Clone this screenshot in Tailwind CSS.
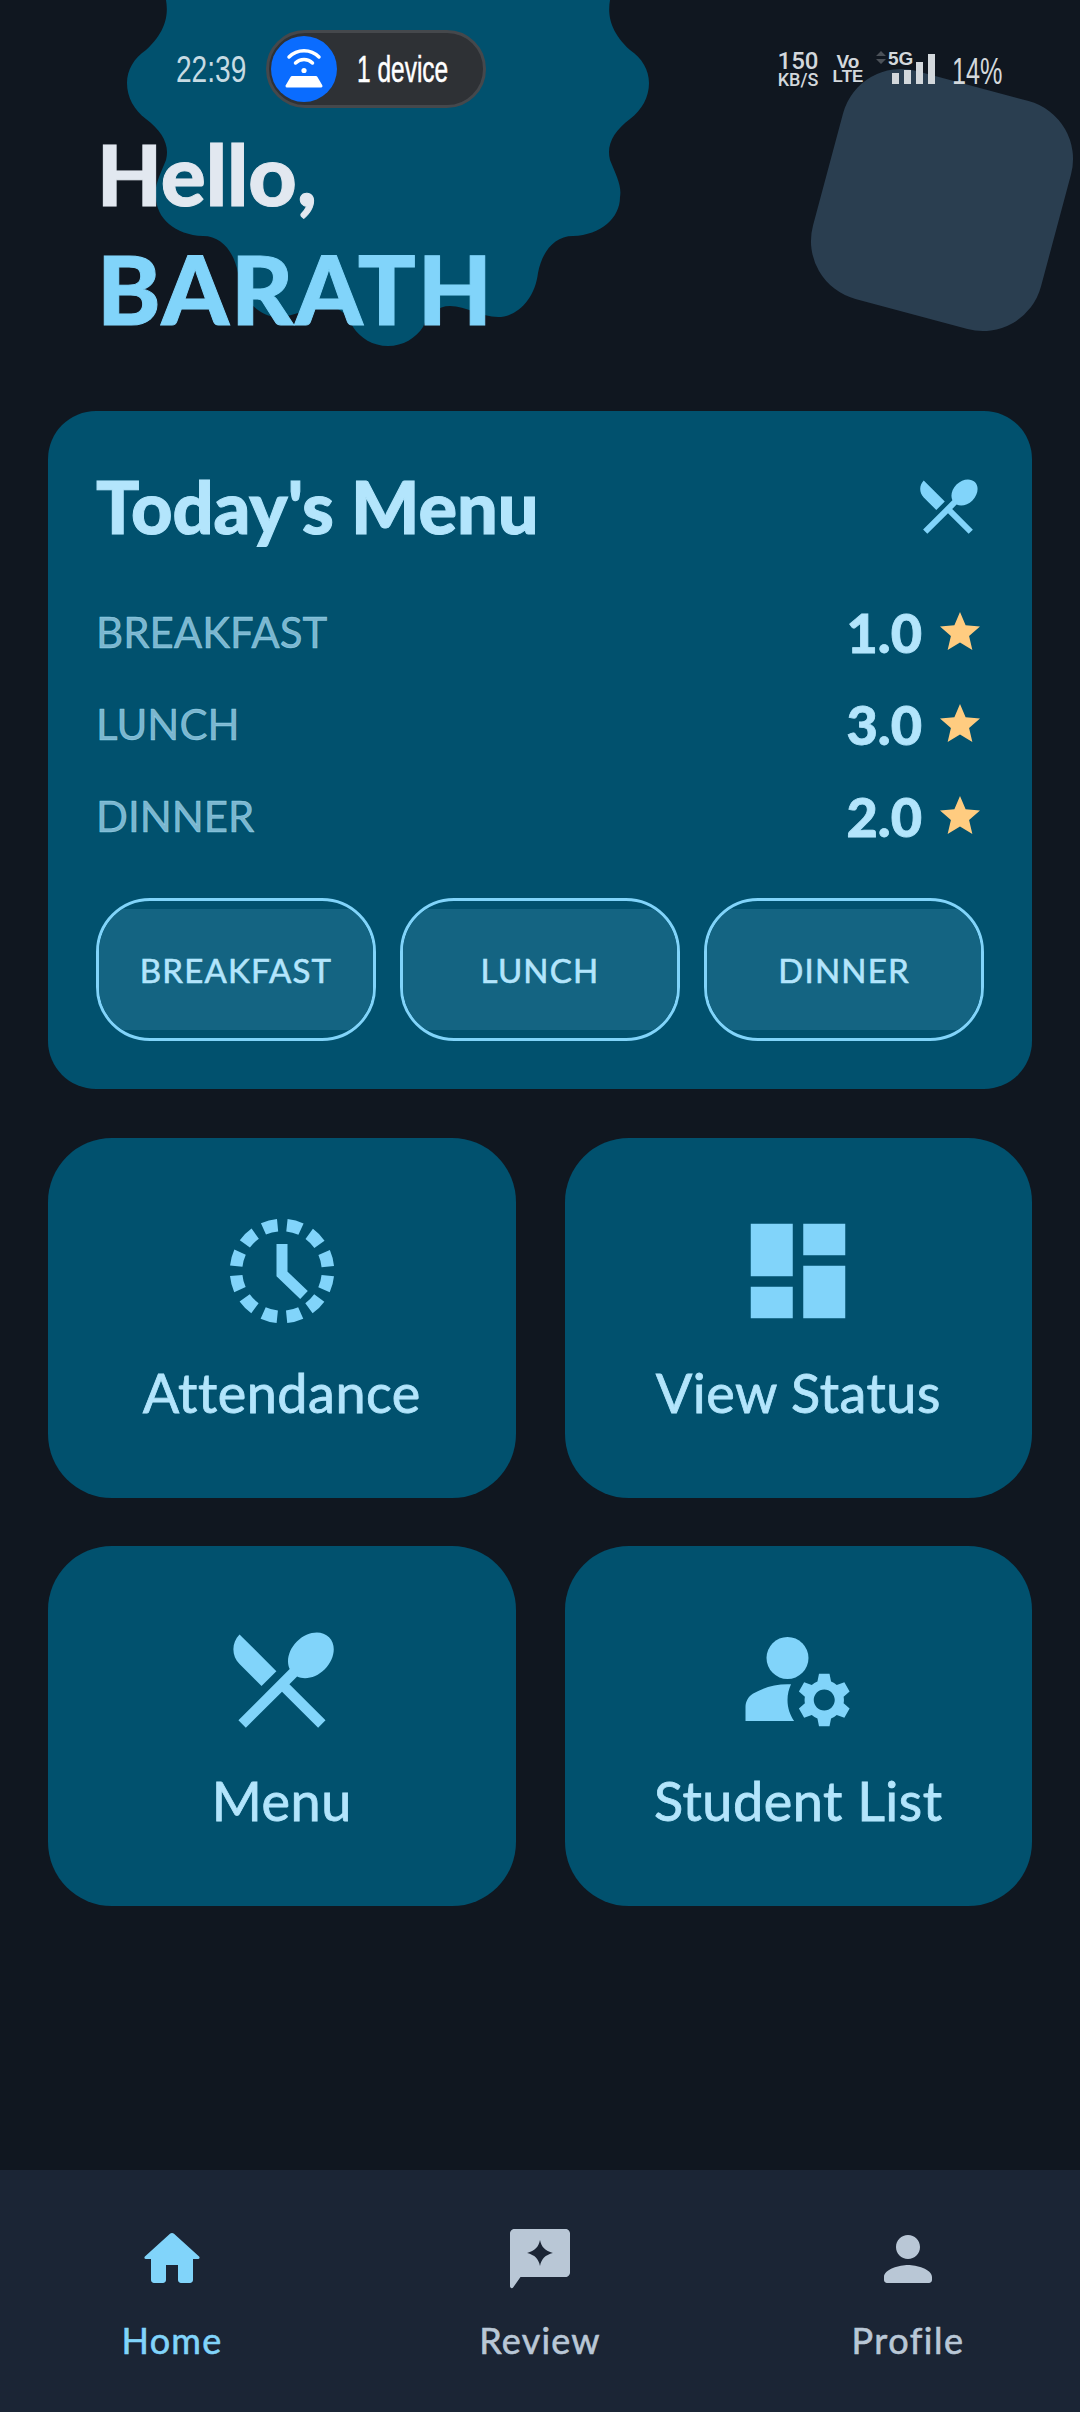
<!DOCTYPE html>
<html lang="en">
<head>
  <meta charset="UTF-8">
  <meta name="viewport" content="width=device-width, initial-scale=1.0">
  <script src="https://cdn.jsdelivr.net/npm/@tailwindcss/browser@4"></script>
  <title>Home</title>
</head>
<body class="bg-[#101720] font-['Lato',sans-serif]">
  <div class="relative w-[1080px] h-[2412px] overflow-hidden flex flex-col">

    <!-- background shapes -->
    <svg class="absolute left-0 top-0" width="700" height="360" viewBox="0 0 700 360">
      <path fill="#01516e" d="M166 0 C168 12 168 30 146 50 C134 58 127 70 127 83 C127 97 134 110 146 119 C162 131 170 145 166 160 C160 175 154 186 156 197 C156 218 175 235 203 236 C222 236 234 252 238 273 C241 298 258 317 278 317 C295 317 310 306 326 306 C338 306 348 314 353 327 C360 338 373 346 388 346 C403 346 416 338 423 327 C428 314 438 306 450 306 C466 306 481 317 498 317 C518 317 535 298 538 273 C542 252 554 236 573 236 C601 235 620 218 620 197 C622 186 616 175 610 160 C606 145 614 131 630 119 C642 110 649 97 649 83 C649 70 642 58 630 50 C608 30 608 12 610 0 Z"/>
    </svg>
    <div class="absolute left-[824px] top-[82px] w-[236px] h-[236px] rounded-[60px] rotate-[15deg] bg-[#2a3e50]"></div>

    <!-- status bar -->
    <div class="absolute left-0 top-[30px] w-full h-[78px] pl-[176px] pr-[80px] flex items-center text-[#d3d8dc] font-['Liberation_Sans',sans-serif]">
      <span class="w-[90px] text-[36px] text-[#c7dbe3] whitespace-nowrap origin-left scale-x-[0.78] mt-[2px]">22:39</span>
      <div class="w-[220px] h-[78px] rounded-full border-[3px] border-[#45484c] bg-[#2e3135] flex items-center pl-[2px]">
        <div class="w-[66px] h-[66px] rounded-full bg-[#0a6cff]">
          <svg width="66" height="66" viewBox="0 0 66 66" fill="none">
            <path d="M18 21 A21 21 0 0 1 48 21" stroke="#fff" stroke-width="3.5" stroke-linecap="round"/>
            <path d="M24.5 27 A12 12 0 0 1 41.5 27" stroke="#fff" stroke-width="3.5" stroke-linecap="round"/>
            <circle cx="33" cy="34.500" r="2.600" fill="#fff"/>
            <path d="M21 41.500 H45 L50 50 H16 Z" fill="#fff" stroke="#fff" stroke-width="3" stroke-linejoin="round"/>
          </svg>
        </div>
        <span class="ml-[20px] text-[36px] text-white whitespace-nowrap origin-left scale-x-[0.68] [-webkit-text-stroke:0.5px_white] mt-[2px]">1 device</span>
      </div>
      <div class="ml-auto flex items-center">
        <div class="flex flex-col items-center leading-none w-[44px]">
          <span class="text-[24px] font-['Roboto',sans-serif] font-medium leading-[20px]">150</span>
          <span class="text-[18px] font-['Roboto',sans-serif] font-medium leading-[17px]">KB/S</span>
        </div>
        <div class="flex flex-col items-center ml-[16px] w-[24px] font-bold">
          <span class="text-[19px] leading-[15px]">Vo</span>
          <span class="text-[17px] leading-[15px]">LTE</span>
        </div>
        <div class="relative ml-[16px] w-[60px] h-[36px]">
          <span class="absolute left-[12px] -top-[2px] text-[19px] font-bold leading-[20px]">5G</span>
          <svg class="absolute left-0 top-0" width="60" height="36" viewBox="0 0 60 36" fill="#d3d8dc">
            <path d="M0 5 L5 0 L10 5 Z M0 8 H10 L5 13 Z" opacity="0.3"/>
            <rect x="16" y="22" width="7" height="11"/>
            <rect x="28" y="19" width="7" height="14"/>
            <rect x="40" y="11" width="7" height="22"/>
            <rect x="52" y="3" width="7" height="30"/>
          </svg>
        </div>
        <span class="ml-[16px] w-[48px] text-[36px] whitespace-nowrap origin-left scale-x-[0.7] mt-[6px]">14%</span>
      </div>
    </div>

    <!-- greeting -->
    <header class="relative h-[411px] pt-[124px] pl-[97px]">
      <h1 class="text-[84px] leading-[100px] font-black [-webkit-text-stroke:1px] text-[#e2e8f0]">Hello,</h1>
      <p class="mt-[9px] text-[96px] leading-[110px] font-black tracking-[2px] [-webkit-text-stroke:1px] text-[#81d4fa]">BARATH</p>
    </header>

    <main class="relative px-[48px]">
      <!-- today's menu -->
      <section class="bg-[#01516e] rounded-[48px] px-[48px] pt-[59px] h-[678px]">
        <div class="flex items-center justify-between h-[72px]">
          <h2 class="text-[72px] leading-none font-black [-webkit-text-stroke:1px] text-[#b3e5fc]">Today's Menu</h2>
          <svg class="w-[72px] h-[72px]" viewBox="0 0 24 24" fill="#81d4fa"><path d="M8.1 13.34l2.83-2.83L3.91 3.5c-1.56 1.56-1.56 4.09 0 5.66l4.19 4.18zm6.78-1.81c1.53.71 3.68.21 5.27-1.38 1.91-1.91 2.28-4.65.81-6.12-1.46-1.46-4.2-1.1-6.12.81-1.59 1.59-2.09 3.74-1.38 5.27L3.7 19.87l1.41 1.41L12 14.41l6.88 6.88 1.41-1.41L13.41 13l1.47-1.47z"/></svg>
        </div>
        <div class="mt-[44px]">
          <div class="flex items-center h-[92px]">
            <span class="text-[42px] text-[#b3e5fc]/70 [-webkit-text-stroke:0.5px]">BREAKFAST</span>
            <span class="ml-auto text-[54px] font-black [-webkit-text-stroke:0.8px] text-[#b3e5fc]">1.0</span>
            <svg class="ml-[14px] w-[48px] h-[48px]" viewBox="0 0 24 24" fill="#ffcc80"><path d="M12 17.27 18.18 21l-1.64-7.03L22 9.24l-7.19-.61L12 2 9.19 8.63 2 9.24l5.46 4.73L5.82 21z"/></svg>
          </div>
          <div class="flex items-center h-[92px]">
            <span class="text-[42px] text-[#b3e5fc]/70 [-webkit-text-stroke:0.5px]">LUNCH</span>
            <span class="ml-auto text-[54px] font-black [-webkit-text-stroke:0.8px] text-[#b3e5fc]">3.0</span>
            <svg class="ml-[14px] w-[48px] h-[48px]" viewBox="0 0 24 24" fill="#ffcc80"><path d="M12 17.27 18.18 21l-1.64-7.03L22 9.24l-7.19-.61L12 2 9.19 8.63 2 9.24l5.46 4.73L5.82 21z"/></svg>
          </div>
          <div class="flex items-center h-[92px]">
            <span class="text-[42px] text-[#b3e5fc]/70 [-webkit-text-stroke:0.5px]">DINNER</span>
            <span class="ml-auto text-[54px] font-black [-webkit-text-stroke:0.8px] text-[#b3e5fc]">2.0</span>
            <svg class="ml-[14px] w-[48px] h-[48px]" viewBox="0 0 24 24" fill="#ffcc80"><path d="M12 17.27 18.18 21l-1.64-7.03L22 9.24l-7.19-.61L12 2 9.19 8.63 2 9.24l5.46 4.73L5.82 21z"/></svg>
          </div>
        </div>
        <div class="mt-[36px] grid grid-cols-3 gap-[24px]">
          <button class="h-[143px] rounded-[54px] border-[3px] border-[#81d4fa] overflow-hidden py-[8px] flex">
            <span class="flex-1 bg-[#146482] flex items-center justify-center pt-[2px] text-[33px] tracking-[1.2px] [-webkit-text-stroke:0.6px] text-[#b3e5fc]">BREAKFAST</span>
          </button>
          <button class="h-[143px] rounded-[54px] border-[3px] border-[#81d4fa] overflow-hidden py-[8px] flex">
            <span class="flex-1 bg-[#146482] flex items-center justify-center pt-[2px] text-[33px] tracking-[1.2px] [-webkit-text-stroke:0.6px] text-[#b3e5fc]">LUNCH</span>
          </button>
          <button class="h-[143px] rounded-[54px] border-[3px] border-[#81d4fa] overflow-hidden py-[8px] flex">
            <span class="flex-1 bg-[#146482] flex items-center justify-center pt-[2px] text-[33px] tracking-[1.2px] [-webkit-text-stroke:0.6px] text-[#b3e5fc]">DINNER</span>
          </button>
        </div>
      </section>

      <!-- shortcuts -->
      <div class="mt-[49px] grid grid-cols-2 gap-x-[49px] gap-y-[48px]">
        <a class="h-[360px] rounded-[64px] bg-[#01516e] flex flex-col items-center pt-[70px]">
          <svg class="w-[126px] h-[126px]" viewBox="0 0 126 126" fill="none" stroke="#81d4fa">
            <circle cx="63" cy="63" r="46" stroke-width="12.500" stroke-dasharray="14.600 9.480" stroke-dashoffset="-4.700"/>
            <path d="M63 36 V66 L85 87" stroke-width="11"/>
          </svg>
          <span class="mt-[18px] text-[54px] tracking-[0.5px] [-webkit-text-stroke:0.8px] text-[#b3e5fc]">Attendance</span>
        </a>
        <a class="h-[360px] rounded-[64px] bg-[#01516e] flex flex-col items-center pt-[70px]">
          <svg class="w-[126px] h-[126px]" viewBox="0 0 24 24" fill="#81d4fa"><path d="M3 13h8V3H3v10zm0 8h8v-6H3v6zm10 0h8V11h-8v10zm0-18v6h8V3h-8z"/></svg>
          <span class="mt-[18px] text-[54px] tracking-[0.5px] [-webkit-text-stroke:0.8px] text-[#b3e5fc]">View Status</span>
        </a>
        <a class="h-[360px] rounded-[64px] bg-[#01516e] flex flex-col items-center pt-[70px]">
          <svg class="w-[126px] h-[126px]" viewBox="0 0 24 24" fill="#81d4fa"><path d="M8.1 13.34l2.83-2.83L3.91 3.5c-1.56 1.56-1.56 4.09 0 5.66l4.19 4.18zm6.78-1.81c1.53.71 3.68.21 5.27-1.38 1.91-1.91 2.28-4.65.81-6.12-1.46-1.46-4.2-1.1-6.12.81-1.59 1.59-2.09 3.74-1.38 5.27L3.7 19.87l1.41 1.41L12 14.41l6.88 6.88 1.41-1.41L13.41 13l1.47-1.47z"/></svg>
          <span class="mt-[18px] text-[54px] tracking-[0.5px] [-webkit-text-stroke:0.8px] text-[#b3e5fc]">Menu</span>
        </a>
        <a class="h-[360px] rounded-[64px] bg-[#01516e] flex flex-col items-center pt-[70px]">
          <svg class="w-[126px] h-[126px]" viewBox="0 0 24 24" fill="#81d4fa"><circle cx="10" cy="8" r="4"/><path d="M10.67 13.02C10.45 13.01 10.23 13 10 13c-2.42 0-4.68.67-6.61 1.82-.88.52-1.39 1.5-1.39 2.53V20h9.26c-.79-1.13-1.26-2.51-1.26-4 0-1.07.25-2.07.67-2.98z"/><path d="M20.75 16c0-.22-.03-.42-.06-.63l1.14-1.01-1-1.73-1.45.49c-.32-.27-.68-.48-1.08-.63L18 11h-2l-.3 1.49c-.4.15-.76.36-1.08.63l-1.45-.49-1 1.73 1.14 1.01c-.03.21-.06.41-.06.63s.03.42.06.63l-1.14 1.01 1 1.73 1.45-.49c.32.27.68.48 1.08.63L16 21h2l.3-1.49c.4-.15.76-.36 1.08-.63l1.45.49 1-1.73-1.14-1.01c.03-.21.06-.41.06-.63zM17 18c-1.1 0-2-.9-2-2s.9-2 2-2 2 .9 2 2-.9 2-2 2z"/></svg>
          <span class="mt-[18px] text-[54px] tracking-[0.5px] [-webkit-text-stroke:0.8px] text-[#b3e5fc]">Student List</span>
        </a>
      </div>
    </main>

    <!-- bottom nav -->
    <nav class="relative mt-auto h-[242px] bg-[#1b2535] px-[72px] pt-[53px] flex justify-between">
      <a class="w-[200px] flex flex-col items-center">
        <svg class="w-[72px] h-[72px]" viewBox="0 0 24 24" fill="#81d4fa"><path d="M10 19v-5h4v5c0 .55.45 1 1 1h3c.55 0 1-.45 1-1v-7h1.7c.46 0 .68-.57.33-.87L12.67 3.6c-.38-.34-.96-.34-1.34 0l-8.36 7.53c-.34.3-.13.87.33.87H5v7c0 .55.45 1 1 1h3c.55 0 1-.45 1-1z"/></svg>
        <span class="mt-[18px] text-[36px] tracking-[1.200px] [-webkit-text-stroke:0.6px] text-[#81d4fa]">Home</span>
      </a>
      <a class="w-[200px] flex flex-col items-center">
        <svg class="w-[72px] h-[72px]" viewBox="0 0 24 24" fill="#b9c7d6"><path fill-rule="evenodd" d="M20.500 2H3.500C2.700 2 2 2.700 2 3.500V21c0 .7.7 1 1.100.4L5.500 18H20.500c.8 0 1.500-.7 1.500-1.500V3.500C22 2.700 21.300 2 20.500 2zM12 5.700c.5 2.400 1.700 3.600 4.300 4.300-2.600.7-3.800 1.900-4.300 4.300-.5-2.400-1.700-3.600-4.300-4.300 2.600-.7 3.800-1.900 4.300-4.300z"/></svg>
        <span class="mt-[18px] text-[36px] tracking-[1.200px] [-webkit-text-stroke:0.6px] text-[#b9c7d6]">Review</span>
      </a>
      <a class="w-[200px] flex flex-col items-center">
        <svg class="w-[72px] h-[72px]" viewBox="0 0 24 24" fill="#b9c7d6"><path d="M12 12c2.210 0 4-1.790 4-4s-1.790-4-4-4-4 1.790-4 4 1.790 4 4 4zm0 2c-2.670 0-8 1.340-8 4v1c0 .55.45 1 1 1h14c.55 0 1-.45 1-1v-1c0-2.660-5.330-4-8-4z"/></svg>
        <span class="mt-[18px] text-[36px] tracking-[1.500px] [-webkit-text-stroke:0.6px] text-[#b9c7d6]">Profile</span>
      </a>
    </nav>
  </div>
</body>
</html>
